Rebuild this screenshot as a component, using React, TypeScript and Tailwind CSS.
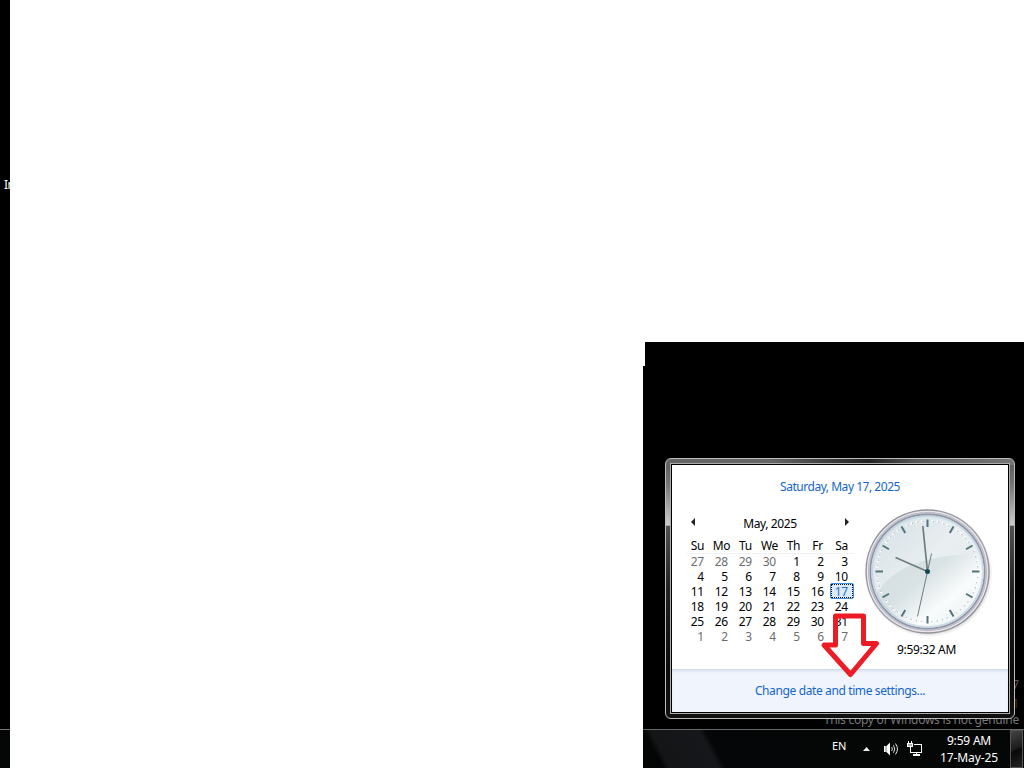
import React from "react";

const DAYS = ["Su", "Mo", "Tu", "We", "Th", "Fr", "Sa"];
const WEEKS = [
  [27, 28, 29, 30, 1, 2, 3],
  [4, 5, 6, 7, 8, 9, 10],
  [11, 12, 13, 14, 15, 16, 17],
  [18, 19, 20, 21, 22, 23, 24],
  [25, 26, 27, 28, 29, 30, 31],
  [1, 2, 3, 4, 5, 6, 7],
];

function Clock() {
  const ticks = Array.from({ length: 60 }, (_, i) => i);
  return (
    <svg className="block h-[130px] w-[130px]" viewBox="0 0 130 130">
      <defs>
        <linearGradient id="rim" x1="0" y1="0" x2="1" y2="1">
          <stop offset="0" stopColor="#85878c" />
          <stop offset="0.5" stopColor="#a0a0a8" />
          <stop offset="1" stopColor="#85858d" />
        </linearGradient>
        <linearGradient id="face" x1="0" y1="0" x2="1" y2="1">
          <stop offset="0" stopColor="#d3dfe4" />
          <stop offset="0.45" stopColor="#e9eef0" />
          <stop offset="1" stopColor="#e3eaec" />
        </linearGradient>
        <linearGradient id="sheen" x1="0.05" y1="0.1" x2="0.9" y2="0.8">
          <stop offset="0" stopColor="#d3dde1" />
          <stop offset="0.4" stopColor="#d9e2e5" />
          <stop offset="0.72" stopColor="#fafcfc" />
          <stop offset="1" stopColor="#e8eff1" />
        </linearGradient>
        <radialGradient id="shade" cx="0.5" cy="0.5" r="0.5">
          <stop offset="0.9" stopColor="#777" stopOpacity="0.4" />
          <stop offset="1" stopColor="#777" stopOpacity="0" />
        </radialGradient>
        <clipPath id="dial"><circle cx="64.5" cy="64.5" r="56" /></clipPath>
      </defs>
      <circle cx="66" cy="66.5" r="63.5" fill="url(#shade)" />
      <circle cx="64.5" cy="64.5" r="62.2" fill="url(#rim)" />
      <circle cx="64.5" cy="64.5" r="60" fill="none" stroke="#e6e6eb" strokeWidth="1.6" />
      <circle cx="64.5" cy="64.5" r="58.4" fill="none" stroke="#c0c1ca" strokeWidth="1.8" />
      <circle cx="64.5" cy="64.5" r="57" fill="url(#face)" stroke="#8d94aa" strokeWidth="1.4" />
      <path clipPath="url(#dial)" d="M10 91 C28 60 62 47 122 47 V125 H10 Z" fill="url(#sheen)" />
      <circle cx="64.5" cy="64.5" r="55.4" fill="none" stroke="#b9cfda" strokeOpacity=".7" strokeWidth="1.8" />
      {ticks.map((i) =>
        i % 5 === 0 ? (
          <path key={i} d="M64.5 12.5V20" stroke="#52747b" strokeWidth="2" transform={`rotate(${i * 6} 64.5 64.5)`} />
        ) : (
          <g key={i} transform={`rotate(${i * 6} 64.5 64.5)`}>
            <circle cx="64.3" cy="13.8" r="1.3" fill="#fff" />
            <circle cx="65.1" cy="14" r=".7" fill="#a9bdc3" />
          </g>
        )
      )}
      <path d="M64.5 64.5L59.8 19" stroke="#6d7e82" strokeWidth="1.7" />
      <path d="M64.5 64.5L32.5 50.5" stroke="#6d7e82" strokeWidth="1.7" />
      <path d="M68.5 46.5L54.5 109.5" stroke="#5e7075" strokeWidth="0.9" />
      <circle cx="64.5" cy="64.5" r="2.5" fill="#164850" />
    </svg>
  );
}

function Calendar() {
  return (
    <div className="ml-[14px] w-[168px] text-[12px]">
      <div className="flex h-[17px] items-center justify-between pl-[5px] pr-[5px]">
        <svg className="mb-[2px] h-[8px] w-[4px]" viewBox="0 0 4 8"><path d="M4 0V8L0 4Z" fill="#222" /></svg>
        <span className="pt-[2px] tracking-[-0.4px]">May, 2025</span>
        <svg className="mb-[2px] h-[8px] w-[4px]" viewBox="0 0 4 8"><path d="M0 0V8L4 4Z" fill="#222" /></svg>
      </div>
      <div className="mt-[7px] grid h-[16px] grid-cols-7 border-b border-[#f2f2f2] leading-[15px]">
        {DAYS.map((d) => <span key={d} className="pr-px text-center tracking-[-0.3px]">{d}</span>)}
      </div>
      {WEEKS.map((week, r) => (
        <div key={r} className="grid h-[15px] grid-cols-7 leading-[15px]">
          {week.map((n, c) => {
            const muted = (r === 0 && c < 4) || r === 5;
            const today = r === 2 && c === 6;
            return (
              <span
                key={c}
                className={
                  today
                    ? "relative pr-[6.5px] text-right tracking-[-0.5px] text-[#2870c8]"
                    : muted
                      ? "pr-[6.5px] text-right tracking-[-0.5px] text-[#6d6d6d]"
                      : "pr-[6.5px] text-right tracking-[-0.5px] text-black"
                }
              >
                {today && (
                  <span className="absolute inset-x-0 -top-px h-[16px] rounded-[2px] border border-[#3f8fdc] bg-[#dbeafb]">
                    <span className="block h-full border border-dotted border-[#111]" />
                  </span>
                )}
                <span className="relative">{n}</span>
              </span>
            );
          })}
        </div>
      ))}
    </div>
  );
}

function DatePanel() {
  return (
    <div className="h-[261px] w-[350px] rounded-[6px] border border-[#bcbcbc] bg-[linear-gradient(180deg,transparent_6px,#606060_6px,#777_10%,#ccc_25.5%,#505250_26%,#222_50%,#0b0b0b_80%,#111_100%),linear-gradient(90deg,#666_0,#666_30%,#222_58%,#555_72%,#777_100%)] p-[4px]">
      <div className="h-full border border-[#aaa] bg-black p-px">
        <div className="flex h-full flex-col bg-white">
          <div className="h-[204px]">
            <div className="h-[42px] pt-[13px] text-center text-[12px] leading-[17px] tracking-[-0.47px] text-[#1266cc]">Saturday, May 17, 2025</div>
            <div className="flex">
              <div className="w-[191px] pt-[7px]"><Calendar /></div>
              <div className="flex w-[130px] flex-col items-center">
                <Clock />
                <span className="mt-[4px] whitespace-nowrap pr-[3px] text-[12px] leading-[17px] tracking-[-0.35px]">9:59:32 AM</span>
              </div>
            </div>
          </div>
          <div className="flex-1 border-t border-[#ccd9e8] bg-[#f0f4fc] pt-[12px] text-center text-[12px] leading-[17px] tracking-[-0.38px] text-[#1266cc] shadow-[inset_0_2px_2px_#dfe8f4]">Change date and time settings...</div>
        </div>
      </div>
    </div>
  );
}

function Taskbar() {
  return (
    <div className="flex h-[39px] border-t border-[#686868] bg-[linear-gradient(62deg,#040606_0,#040606_18px,#131517_24px,#15171a_67px,#050607_73px,#050706_100%)] text-[12px] text-white">
      <span className="ml-[189px] mt-[8px] w-[28px] text-[11px] leading-[15px] tracking-[-0.2px]">EN</span>
      <svg className="ml-[3px] mt-[17px] h-[4px] w-[7px]" viewBox="0 0 7 4"><path d="M0 4L3.5 0L7 4Z" fill="#eee" /></svg>
      <svg className="ml-[13px] mt-[11px] h-[16px] w-[16px]" viewBox="0 0 16 16">
        <path d="M1 5H3.5L7 1.5V14.5L3.5 11H1Z" fill="#fff" />
        <path d="M3 5V11" stroke="#555" strokeWidth=".8" />
        <path d="M8.7 6Q10 8 8.7 10M10.5 4.2Q13 8 10.5 11.8M12.4 2.5Q16.5 8 12.4 13.5" stroke="#ddd" fill="none" />
      </svg>
      <svg className="ml-[8px] mt-[11px] h-[16px] w-[16px]" viewBox="0 0 16 16" shapeRendering="crispEdges">
        <path d="M7 3.5H14.5V11.5H5" fill="none" stroke="#fff" />
        <path d="M9.5 12V14M6 14H13" stroke="#fff" strokeWidth="1.5" />
        <path d="M1.5 0V3M4.5 0V3" stroke="#fff" />
        <path d="M.5 2.5H5.5V5.5H.5Z" fill="#aaa" stroke="#fff" />
        <path d="M3.5 6V11.5H5" fill="none" stroke="#fff" />
      </svg>
      <div className="ml-[8px] mt-[2px] w-[76px] whitespace-nowrap text-center leading-[17px]">
        <div className="tracking-[-0.2px]">9:59 AM</div>
        <div className="tracking-[-0.1px]">17-May-25</div>
      </div>
      <div className="ml-auto mr-px h-[38px] w-[13px] border border-[#555] bg-[linear-gradient(155deg,#444,#1c1c1c_48%,#080808_54%,#222)]" />
    </div>
  );
}

export default function App() {
  return (
    <div className="flex h-[768px] w-[1025px] overflow-hidden bg-white font-['Noto_Sans','Open_Sans',sans-serif] text-black">
      <div className="flex w-[10px] flex-col overflow-hidden bg-black">
        <span className="mt-[177px] h-[552px] pl-[4px] text-[12px] leading-[16px] tracking-[-0.5px] text-white">In</span>
        <div className="flex-1 border-t border-[#777] bg-[#040706]" />
      </div>
      <div className="ml-[633px] flex w-[381px] flex-col">
        <div className="h-[342px]" />
        <div className="ml-[2px] h-[24px] w-[379px] bg-black" />
        <div className="relative h-[363px] bg-black">
          <div className="absolute right-[5px] top-[346px] whitespace-nowrap text-[12px] leading-[16px] tracking-[-0.27px] text-[#777]">This copy of Windows is not genuine</div>
          <div className="absolute right-[5px] top-[311px] text-[12px] leading-[16px] text-[#655]">7</div>
          <div className="absolute right-[5px] top-[330px] text-[12px] leading-[16px] text-[#543018]">1</div>
          <div className="relative ml-[22px] pt-[92px]"><DatePanel /></div>
          <svg className="absolute left-[177px] top-[246px] h-[68px] w-[62px]" viewBox="0 0 62 68">
            <path d="M15.5 4H43.5V31.5H56.5L30.5 62.5L4 33H15.5Z" fill="none" stroke="#ed1c24" strokeWidth="5" strokeLinejoin="round" />
          </svg>
        </div>
        <Taskbar />
      </div>
    </div>
  );
}
